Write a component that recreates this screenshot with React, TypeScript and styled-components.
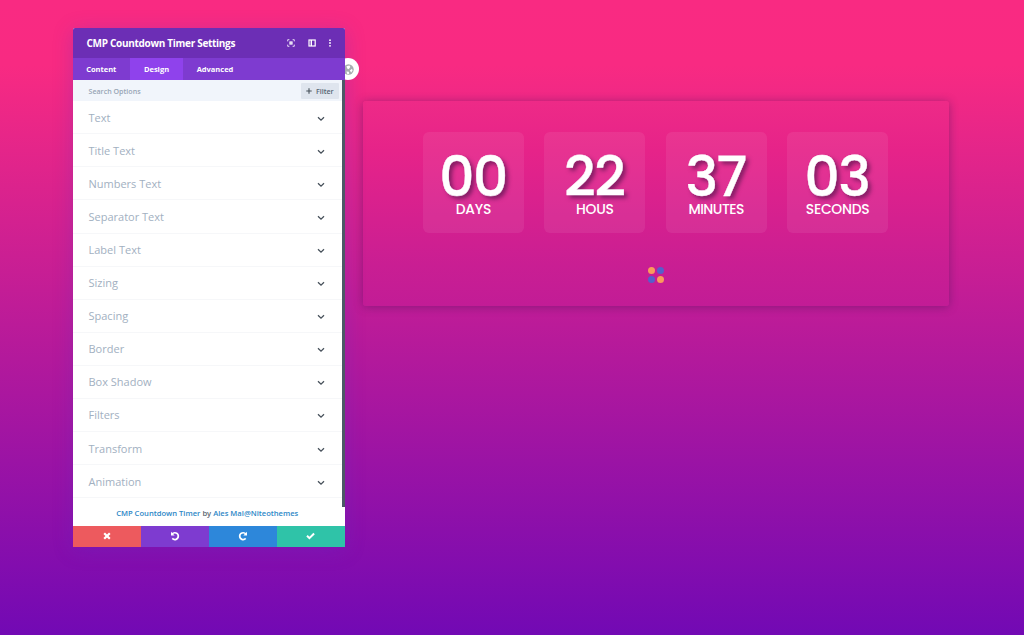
import React from 'react';
import styled, { createGlobalStyle } from 'styled-components';

const Global = createGlobalStyle`
  * { box-sizing: border-box; }
  body {
    margin: 0;
    height: 635px;
    overflow: hidden;
    font-family: 'Open Sans', sans-serif;
    background: linear-gradient(180deg, #f92a82 0, #f82a82 65px, #7209b4 635px);
  }
`;

const Page = styled.main`
  display: flex;
  align-items: flex-start;
  gap: 18px;
  height: 635px;
  padding: 28px 0 0 72.5px;
`;

const PanelWrap = styled.div`
  position: relative;
  width: 272.5px;
`;

const Panel = styled.section`
  position: relative;
  display: flex;
  flex-direction: column;
  height: 519px;
  border-radius: 2px 2px 0 0;
  overflow: hidden;
  background: #fff;
`;

const PanelShadow = styled.div`
  border-radius: 2px;
  box-shadow: 0 3px 20px rgba(90, 50, 200, 0.28);
`;

const Header = styled.header`
  display: flex;
  align-items: center;
  height: 30px;
  padding: 0 12px 0 14px;
  background: #6c2eb5;
  color: #fff;
`;

const Title = styled.h1`
  flex: 1;
  margin: 0;
  font-size: 10px;
  line-height: 14px;
  font-weight: 700;
  letter-spacing: -0.3px;
  white-space: nowrap;
`;

const HeaderIcons = styled.div`
  display: flex;
  align-items: center;
  gap: 13.5px;
  svg { display: block; }
  svg:last-child { margin-left: -2.5px; }
`;

const Tabs = styled.nav`
  display: flex;
  height: 22px;
  background: #7e3bd0;
`;

const Tab = styled.div<{ $active?: boolean; $width: number }>`
  display: flex;
  align-items: center;
  justify-content: center;
  width: ${p => p.$width}px;
  background: ${p => (p.$active ? '#8f42ec' : 'transparent')};
  color: #fff;
  font-size: 7.5px;
  font-weight: 700;
`;

const Scroll = styled.div`
  height: 427px;
  border-right: 3.5px solid #4c5866;
`;

const Search = styled.div`
  display: flex;
  align-items: center;
  justify-content: space-between;
  height: 21.2px;
  padding: 0 3px 0 16px;
  background: #f1f5fb;
  color: #98a5b5;
  font-size: 7.1px;
  font-weight: 600;
`;

const Filter = styled.div`
  display: flex;
  align-items: center;
  justify-content: center;
  gap: 4px;
  width: 38.5px;
  height: 16px;
  border-radius: 1px;
  background: #dfe5ee;
  color: #576574;
  font-weight: 600;
`;

const Row = styled.div`
  display: flex;
  align-items: center;
  justify-content: space-between;
  height: 33.08px;
  padding: 0 17.5px 0 16px;
  border-bottom: 1px solid #f6f7f9;
  color: #a2b0c1;
  font-size: 11px;
  svg { margin-top: 3px; }
`;

const Credit = styled.div`
  display: flex;
  flex: 1;
  align-items: center;
  justify-content: center;
  gap: 2px;
  margin-top: -7px;
  padding-right: 3px;
  font-size: 7.6px;
  font-weight: 600;
  color: #5b6670;
  white-space: nowrap;
`;

const Link = styled.span`
  color: #2e88c7;
`;

const Actions = styled.footer`
  display: flex;
  height: 21.5px;
`;

const Action = styled.div<{ $color: string }>`
  display: flex;
  flex: 1;
  align-items: center;
  justify-content: center;
  background: ${p => p.$color};
`;

const DragHandle = styled.div`
  position: absolute;
  top: 30px;
  right: -14px;
  display: flex;
  align-items: center;
  justify-content: center;
  width: 22px;
  height: 22px;
  border-radius: 50%;
  background: #fff;
`;

const Countdown = styled.section`
  display: flex;
  flex-direction: column;
  align-items: center;
  width: 586px;
  height: 205px;
  margin-top: 73px;
  padding-top: 31px;
  border-radius: 3px;
  background: linear-gradient(180deg, #ee2a87 0, #e62389 50px, #c91e93 165px, #c21c96 100%);
  box-shadow: 0 1px 10px rgba(70, 20, 90, 0.45);
`;

const Units = styled.div`
  display: flex;
  gap: 20.6px;
  margin-right: 1px;
`;

const Unit = styled.div`
  display: flex;
  flex-direction: column;
  align-items: center;
  width: 100.8px;
  height: 101px;
  padding-top: 18px;
  border-radius: 6px;
  background: rgba(255, 255, 255, 0.07);
  color: #fff;
  white-space: nowrap;
`;

const Digits = styled.div`
  height: 52px;
  font-family: Poppins, Inter, sans-serif;
  font-size: 55px;
  line-height: 53px;
  font-weight: 500;
  letter-spacing: -1.5px;
  margin-left: -1px;
  -webkit-text-stroke: 0.4px #fff;
  text-shadow: 3px 3px 4px rgba(60, 15, 65, 0.6);
`;

const Label = styled.div<{ $spacing: number }>`
  font-family: Poppins, Inter, sans-serif;
  font-size: 13.9px;
  line-height: 14px;
  font-weight: 500;
  letter-spacing: ${p => p.$spacing}px;
`;

const Loader = styled.div`
  display: grid;
  grid-template-columns: 7px 7px;
  gap: 2.5px;
  margin-top: 33.5px;
  margin-right: 0.5px;
`;

const Dot = styled.i<{ $color: string }>`
  width: 7px;
  height: 7px;
  border-radius: 50%;
  background: ${p => p.$color};
`;

const options = [
  'Text', 'Title Text', 'Numbers Text', 'Separator Text', 'Label Text', 'Sizing',
  'Spacing', 'Border', 'Box Shadow', 'Filters', 'Transform', 'Animation',
];

const units: [string, string, number][] = [
  ['00', 'DAYS', -0.2],
  ['22', 'HOUS', -0.3],
  ['37', 'MINUTES', -0.5],
  ['03', 'SECONDS', -0.3],
];

const Chevron = () => (
  <svg width="8" height="6" viewBox="0 0 8 6" fill="none" stroke="#46505a" strokeWidth="1.3">
    <path d="M1 1.2 4 4.1 7 1.2" />
  </svg>
);

const FocusIcon = () => (
  <svg width="8" height="8" viewBox="0 0 8 8" fill="none" stroke="#fff" strokeWidth="1">
    <path d="M.7 2.4V.7h1.7M5.6.7h1.7v1.7M7.3 5.6v1.7H5.6M2.4 7.3H.7V5.6" opacity=".8" />
    <rect x="3" y="3" width="2" height="2" strokeWidth="1.2" />
  </svg>
);

const DockIcon = () => (
  <svg width="8" height="8" viewBox="0 0 8 8" fill="none" stroke="#fff" strokeWidth="1.2">
    <rect x="1" y="1" width="6.2" height="6" />
    <path d="M3.3 1v6" strokeWidth="1.4" />
  </svg>
);

const MoreIcon = () => (
  <svg width="6" height="8" viewBox="0 0 6 8" fill="#fff">
    <circle cx="3" cy="1.2" r=".9" />
    <circle cx="3" cy="4" r=".9" />
    <circle cx="3" cy="6.8" r=".9" />
  </svg>
);

const UndoIcon = ({ flip = false }: { flip?: boolean }) => (
  <svg width="10" height="10" viewBox="0 0 10 10" fill="none" stroke="#fff" strokeWidth="1.7">
    <g transform={flip ? 'translate(10 0) scale(-1 1)' : undefined}>
      <path d="M2 3.1C4.2.6 8.3 1.9 8.3 5.1 8.3 8.4 4.4 9.7 2.3 7.4" />
      <path d="M1 .8v3.7h3.7z" fill="#fff" stroke="none" />
    </g>
  </svg>
);

export default function App() {
  return (
    <>
      <Global />
      <Page>
        <PanelWrap>
          <DragHandle>
            <svg width="13" height="13" viewBox="0 0 13 13">
              <circle cx="6.5" cy="6.5" r="5.2" fill="#a8adb0" />
              <path d="M4.5 3.2 7.4 2.4 8.4 4 6.6 6.2 5.2 5.6zM7.8 7.4 10 5.8 10.6 7.4 9.2 9.6zM4.4 8.6l2.4.2.4 2-1.8.4z" fill="#fff" />
            </svg>
          </DragHandle>
          <PanelShadow>
            <Panel>
              <Header>
                <Title>CMP Countdown Timer Settings</Title>
                <HeaderIcons>
                  <FocusIcon />
                  <DockIcon />
                  <MoreIcon />
                </HeaderIcons>
              </Header>
              <Tabs>
                <Tab $width={57.5}>Content</Tab>
                <Tab $width={53} $active>Design</Tab>
                <Tab $width={64}>Advanced</Tab>
              </Tabs>
              <Scroll>
                <Search>
                  <span>Search Options</span>
                  <Filter>
                    <svg width="6" height="6" viewBox="0 0 6 6" stroke="#46505a" strokeWidth="1.1">
                      <path d="M3 .3v5.4M.3 3h5.4" />
                    </svg>
                    Filter
                  </Filter>
                </Search>
                {options.map(name => (
                  <Row key={name}>
                    {name}
                    <Chevron />
                  </Row>
                ))}
              </Scroll>
              <Credit>
                <Link>CMP Countdown Timer</Link>
                <span>by</span>
                <Link>Ales Mal@Niteothemes</Link>
              </Credit>
              <Actions>
                <Action $color="#ed5a5e">
                  <svg width="8" height="8" viewBox="0 0 8 8" stroke="#fff" strokeWidth="2.2">
                    <path d="m1.2 1.2 5.6 5.6M6.8 1.2 1.2 6.8" />
                  </svg>
                </Action>
                <Action $color="#7e3bd0"><UndoIcon /></Action>
                <Action $color="#2d87da"><UndoIcon flip /></Action>
                <Action $color="#2fc3a8">
                  <svg width="9" height="8" viewBox="0 0 9 8" fill="none" stroke="#fff" strokeWidth="2">
                    <path d="m1 3.8 2.4 2.4L8.1 1.5" />
                  </svg>
                </Action>
              </Actions>
            </Panel>
          </PanelShadow>
        </PanelWrap>
        <Countdown>
          <Units>
            {units.map(([value, label, spacing]) => (
              <Unit key={label}>
                <Digits>{value}</Digits>
                <Label $spacing={spacing}>{label}</Label>
              </Unit>
            ))}
          </Units>
          <Loader>
            <Dot $color="#fb9a5c" />
            <Dot $color="#565fcb" />
            <Dot $color="#565fcb" />
            <Dot $color="#fb9a5c" />
          </Loader>
        </Countdown>
      </Page>
    </>
  );
}
